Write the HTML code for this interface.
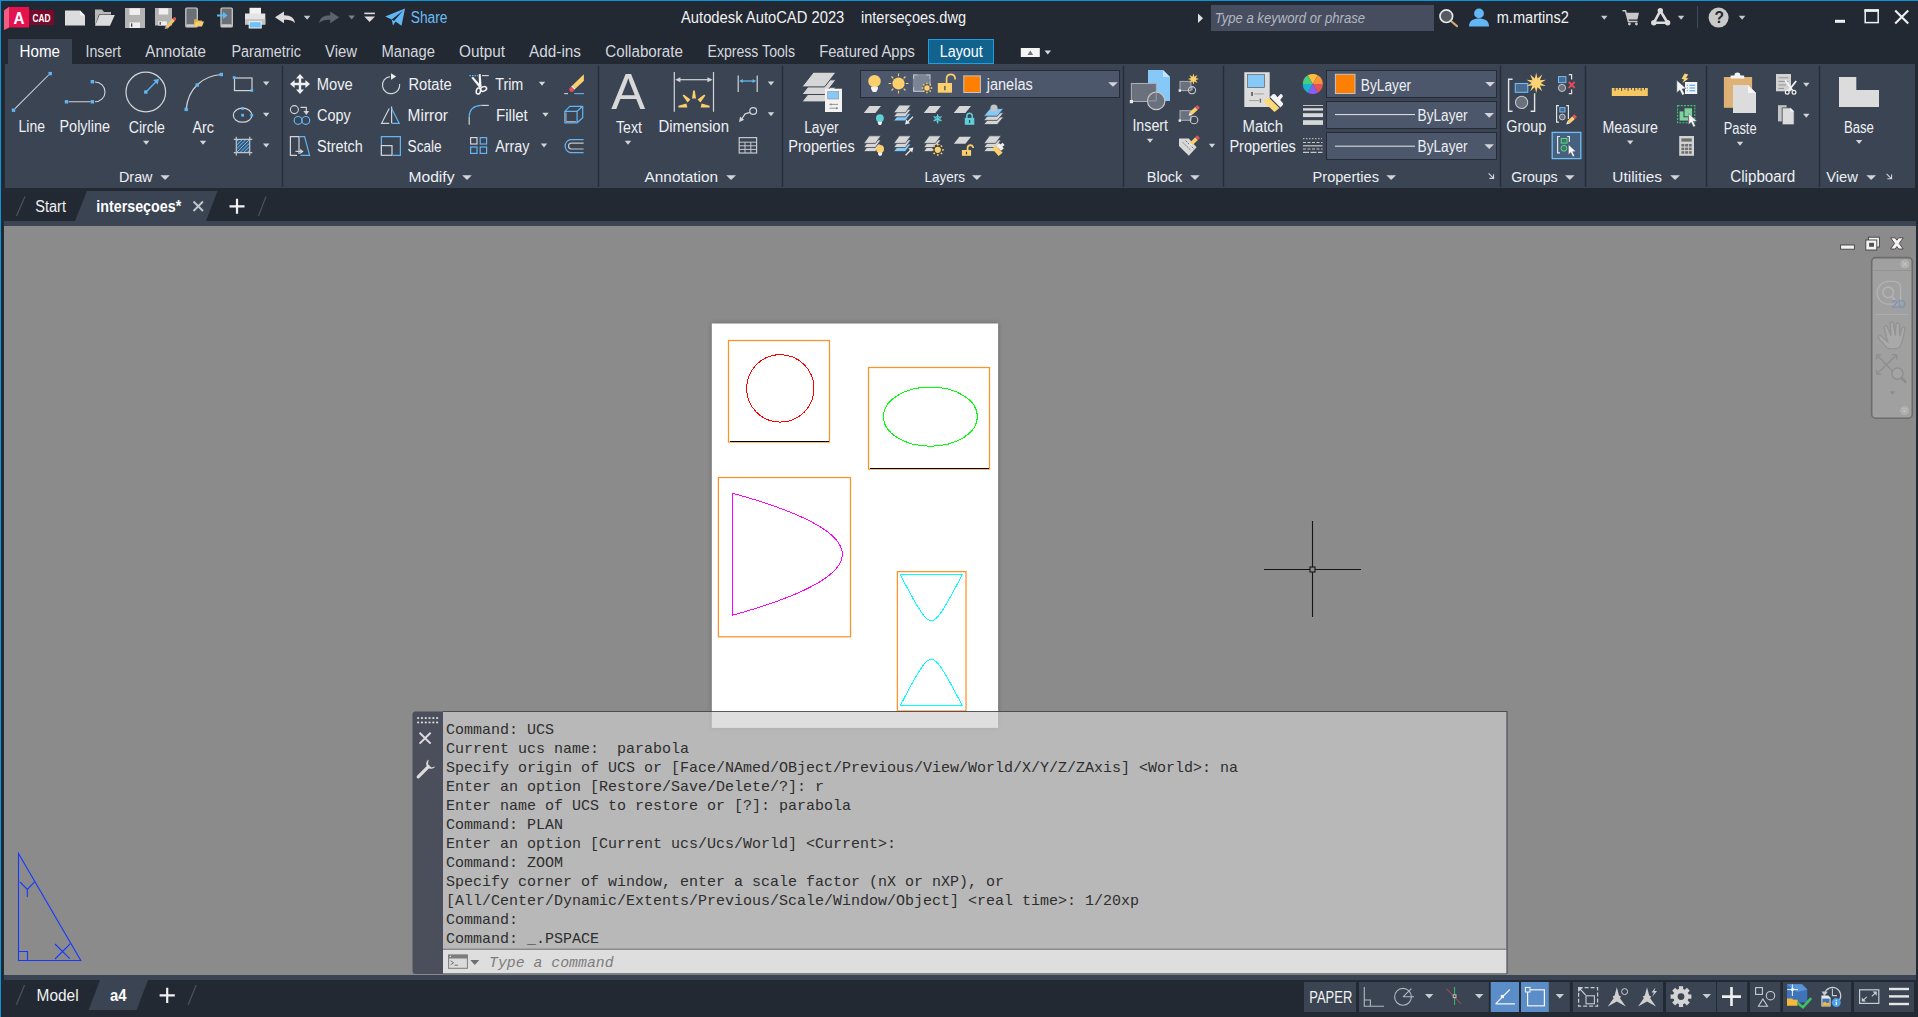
<!DOCTYPE html>
<html lang="en"><head><meta charset="utf-8"><title>Autodesk AutoCAD 2023 - interseçoes.dwg</title>
<style>
html,body{margin:0;padding:0;background:#222933;}
#app{position:relative;width:1918px;height:1017px;overflow:hidden;background:#222933;font-family:"Liberation Sans",sans-serif;}
#app>div{position:absolute;}
#ov{position:absolute;left:0;top:0;width:1918px;height:1017px;font-family:"Liberation Sans",sans-serif;}
#ov text{white-space:pre;}
</style></head>
<body>
<div id="app">
<div style="left:0px;top:0px;width:1918px;height:1px;background:#0c95da;"></div>
<div style="left:0px;top:0px;width:1px;height:1017px;background:#0c95da;"></div>
<div style="left:5px;top:64px;width:1910px;height:124px;background:#3b4453;"></div>
<div style="left:8px;top:39px;width:64px;height:26px;background:#3b4453;"></div>
<div style="left:928px;top:39px;width:66px;height:25px;background:#12628e;box-sizing:border-box;border:1px solid #1f9de0;"></div>
<div style="left:1211px;top:5px;width:223px;height:26px;background:#454d5e;"></div>
<div style="left:4px;top:221px;width:1912px;height:5px;background:#3b4453;"></div>
<div style="left:4px;top:225.7px;width:1912px;height:749px;background:#8b8b8b;"></div>
<div style="left:4px;top:974.7px;width:1912px;height:5.3px;background:#3b4453;"></div>
<svg id="ov" width="1918" height="1017" viewBox="0 0 1918 1017">
<path d="M75 221L87 191H217.5L206 221z" fill="#3b4453" />
<path d="M88.6 1010L100 980H148L136.6 1010z" fill="#3b4453" />
<line x1="282.5" y1="65.5" x2="282.5" y2="186.8" stroke="#272d38" stroke-width="1.4" />
<line x1="598.5" y1="65.5" x2="598.5" y2="186.8" stroke="#272d38" stroke-width="1.4" />
<line x1="782.5" y1="65.5" x2="782.5" y2="186.8" stroke="#272d38" stroke-width="1.4" />
<line x1="1123.5" y1="65.5" x2="1123.5" y2="186.8" stroke="#272d38" stroke-width="1.4" />
<line x1="1223.5" y1="65.5" x2="1223.5" y2="186.8" stroke="#272d38" stroke-width="1.4" />
<line x1="1500.5" y1="65.5" x2="1500.5" y2="186.8" stroke="#272d38" stroke-width="1.4" />
<line x1="1585.5" y1="65.5" x2="1585.5" y2="186.8" stroke="#272d38" stroke-width="1.4" />
<line x1="1706.5" y1="65.5" x2="1706.5" y2="186.8" stroke="#272d38" stroke-width="1.4" />
<line x1="1819.5" y1="65.5" x2="1819.5" y2="186.8" stroke="#272d38" stroke-width="1.4" />
<path d="M4 10.4L9 7H29V27.5H9L4 30z" fill="#e5124f" />
<path d="M4 10.4L9 7V27.5L4 30z" fill="#ee5f85" />
<rect x="29" y="10" width="25" height="15" fill="#7a0a2c" />
<text x="13.5" y="23.6" font-size="17" fill="#ffffff" textLength="11.0" lengthAdjust="spacingAndGlyphs" font-weight="bold">A</text>
<text x="32.5" y="21.6" font-size="10" fill="#ffffff" textLength="18.0" lengthAdjust="spacingAndGlyphs" font-weight="bold">CAD</text>
<path d="M65 10.5H80L85 15.5V25.5H65z" fill="#dcdcdc" />
<path d="M80 10.5V15.5H85z" fill="#f4f4f4" />
<path d="M95 25.8V9.6H102L104 12H111V14.5H99z" fill="#b8b8b8" />
<path d="M95 25.8L99.5 15H114.8L110 25.8z" fill="#dcdcdc" />
<path d="M125 8H145V28H125z" fill="#b4b4b4" />
<rect x="129.5" y="8.3" width="10.5" height="6.6" fill="#efefef" />
<rect x="129.5" y="22.4" width="10.5" height="5.6" fill="#efefef" />
<rect x="131" y="23.4" width="1.3" height="3.4" fill="#444" />
<path d="M155 8H172V25.5H155z" fill="#b4b4b4" />
<rect x="158.8" y="8.3" width="9.4" height="6.2" fill="#efefef" />
<rect x="158.3" y="21.3" width="8.5" height="4.2" fill="#efefef" />
<rect x="159.6" y="22" width="1.2" height="2.8" fill="#444" />
<path d="M165.5 26.5L172.5 18.5L175 20.8L168 28.2L164.8 28.8z" fill="#f2c569" />
<path d="M172.5 18.5L173.6 17.4A1.7 1.7 0 0 1 176 19.6L175 20.8z" fill="#e8505b" />
<path d="M165.5 26.5L168 28.2L164.6 29z" fill="#999" />
<rect x="185.8" y="8" width="11.5" height="19" fill="#6b6f76" stroke="#cfcfcf" stroke-width="1.2" rx="1" />
<rect x="186.4" y="24.3" width="10.3" height="2.5" fill="#cfcfcf" />
<path d="M194 26.5V19.3H197.5L198.5 20.5H202V22z" fill="#dfae4a" />
<path d="M194 26.5L196 21.5H204L202 26.5z" fill="#f6cd74" />
<rect x="221" y="8" width="11.3" height="19" fill="#6b6f76" stroke="#cfcfcf" stroke-width="1.2" rx="1" />
<rect x="221.6" y="24.3" width="10.1" height="2.5" fill="#cfcfcf" />
<path d="M217 14.4H223V11.8L227.6 15.4L223 19V16.4H217z" fill="#5bb8f5" />
<rect x="249.5" y="7.8" width="11.5" height="7" fill="#f2f2f2" />
<path d="M245 13.5H265.3V24.5H245z" fill="#e4e4e4" />
<rect x="245" y="19" width="20.3" height="5.5" fill="#c4c4c4" />
<rect x="249.2" y="21.7" width="12" height="6.3" fill="#6fc1f7" stroke="#f2f2f2" stroke-width="1" />
<path d="M275 17.3L284 11.5V15.2C291 15.2 294.5 18 295 23.2C292.5 20.3 289.5 19.6 284 19.7V23.2z" fill="#dcdcdc" />
<path d="M303.8 15.8h6.5l-3.2 4z" fill="#c8c8c8" />
<path d="M339.2 17.3L330.2 11.5V15.2C323.2 15.2 319.7 18 319.2 23.2C321.7 20.3 324.7 19.6 330.2 19.7V23.2z" fill="#5d636e" />
<path d="M348.4 15.4h6.5l-3.2 4z" fill="#7b808a" />
<rect x="364.3" y="12.6" width="10.6" height="1.6" fill="#dcdcdc" />
<path d="M364.3 16.6H375L369.6 22z" fill="#dcdcdc" />
<path d="M385.2 16.6L405 8.6L401.5 25.8L395.6 21.6L393 25.4L391.7 19.6z" fill="#62b8f5" />
<path d="M391.7 19.6L403.2 10.4L394 21z" fill="#222933" />
<text x="410.8" y="23.4" font-size="15.6" fill="#6cbcf4" textLength="36.7" lengthAdjust="spacingAndGlyphs">Share</text>
<text x="681.0" y="23.3" font-size="15.6" fill="#f2f2f2" textLength="163.3" lengthAdjust="spacingAndGlyphs">Autodesk AutoCAD 2023</text>
<text x="861.0" y="23.3" font-size="15.6" fill="#f2f2f2" textLength="105.0" lengthAdjust="spacingAndGlyphs">interseçoes.dwg</text>
<path d="M1198 13.4L1203 18.2L1198 23z" fill="#e0e0e0" />
<text x="1214.7" y="22.8" font-size="14.5" fill="#b4b8c2" textLength="150.3" lengthAdjust="spacingAndGlyphs" font-style="italic">Type a keyword or phrase</text>
<line x1="1451" y1="21" x2="1457" y2="26.2" stroke="#d0a673" stroke-width="2.2" stroke-linecap="round"/>
<circle cx="1446.3" cy="16.2" r="6.3" fill="#555a63" stroke="#e8e8e8" stroke-width="1.7" />
<circle cx="1479" cy="13.4" r="4.9" fill="#62b8f5" />
<path d="M1469 26.6C1469 20.6 1473.5 18.6 1479 18.6C1484.5 18.6 1489 20.6 1489 26.6z" fill="#62b8f5" />
<text x="1496.7" y="23.3" font-size="15.6" fill="#f2f2f2" textLength="72.1" lengthAdjust="spacingAndGlyphs">m.martins2</text>
<path d="M1601.0 15.8h6.5l-3.2 4z" fill="#c8c8c8" />
<path d="M1622.5 10.8H1625.5L1628.4 21.4H1637.5" fill="none" stroke="#c8c8c8" stroke-width="1.5" />
<path d="M1626 12.8H1639L1637.4 19.4H1627.8z" fill="#c8c8c8" />
<circle cx="1629.4" cy="24" r="1.4" fill="#c8c8c8" />
<circle cx="1636.4" cy="24" r="1.4" fill="#c8c8c8" />
<path d="M1660.3 10.8L1653.8 22.8H1667.6z" fill="none" stroke="#dcdcdc" stroke-width="2.6" stroke-linejoin="round"/>
<circle cx="1660.3" cy="10.6" r="2.7" fill="#dcdcdc" />
<circle cx="1653.8" cy="22.8" r="2.7" fill="#dcdcdc" />
<circle cx="1667.6" cy="22.8" r="2.7" fill="#dcdcdc" />
<path d="M1677.8 15.8h6.5l-3.2 4z" fill="#c8c8c8" />
<line x1="1697.5" y1="6" x2="1697.5" y2="28" stroke="#3f4757" stroke-width="1.2" />
<circle cx="1718.6" cy="17.6" r="10" fill="#c9c9c9" />
<text x="1714.4" y="23.4" font-size="15.6" fill="#222933" font-weight="bold">?</text>
<path d="M1738.8 15.8h6.5l-3.2 4z" fill="#c8c8c8" />
<rect x="1835" y="19.8" width="10" height="3" fill="#f0f0f0" />
<rect x="1865.2" y="10" width="13" height="12.6" fill="none" stroke="#f0f0f0" stroke-width="1.5" />
<rect x="1864.4" y="9.3" width="14.6" height="2.6" fill="#f0f0f0" />
<path d="M1895.2 10.4L1908.2 23.4M1908.2 10.4L1895.2 23.4" fill="none" stroke="#f0f0f0" stroke-width="2.1" />
<text x="19.5" y="56.8" font-size="15.6" fill="#ffffff" textLength="40.5" lengthAdjust="spacingAndGlyphs">Home</text>
<text x="85.5" y="56.8" font-size="15.6" fill="#d4d7de" textLength="35.5" lengthAdjust="spacingAndGlyphs">Insert</text>
<text x="145.3" y="56.8" font-size="15.6" fill="#d4d7de" textLength="60.7" lengthAdjust="spacingAndGlyphs">Annotate</text>
<text x="231.5" y="56.8" font-size="15.6" fill="#d4d7de" textLength="69.5" lengthAdjust="spacingAndGlyphs">Parametric</text>
<text x="325.0" y="56.8" font-size="15.6" fill="#d4d7de" textLength="32.0" lengthAdjust="spacingAndGlyphs">View</text>
<text x="381.5" y="56.8" font-size="15.6" fill="#d4d7de" textLength="53.5" lengthAdjust="spacingAndGlyphs">Manage</text>
<text x="459.0" y="56.8" font-size="15.6" fill="#d4d7de" textLength="46.0" lengthAdjust="spacingAndGlyphs">Output</text>
<text x="529.0" y="56.8" font-size="15.6" fill="#d4d7de" textLength="52.0" lengthAdjust="spacingAndGlyphs">Add-ins</text>
<text x="605.3" y="56.8" font-size="15.6" fill="#d4d7de" textLength="77.7" lengthAdjust="spacingAndGlyphs">Collaborate</text>
<text x="707.5" y="56.8" font-size="15.6" fill="#d4d7de" textLength="87.5" lengthAdjust="spacingAndGlyphs">Express Tools</text>
<text x="819.2" y="56.8" font-size="15.6" fill="#d4d7de" textLength="95.8" lengthAdjust="spacingAndGlyphs">Featured Apps</text>
<text x="939.7" y="56.8" font-size="15.6" fill="#ffffff" textLength="43.1" lengthAdjust="spacingAndGlyphs">Layout</text>
<rect x="1020.8" y="48" width="19" height="9" fill="#f4f4f4" />
<path d="M1027.5 55L1030.3 50.5L1033.1 55z" fill="#707070" />
<path d="M1044.5 50.6h6.5l-3.2 4z" fill="#d8d8d8" />
<line x1="16.5" y1="216" x2="25" y2="196.5" stroke="#4a5263" stroke-width="1.2" />
<text x="35.3" y="212.4" font-size="15.6" fill="#f2f2f2" textLength="30.7" lengthAdjust="spacingAndGlyphs">Start</text>
<text x="96.3" y="212.4" font-size="15.6" fill="#ffffff" textLength="84.9" lengthAdjust="spacingAndGlyphs" font-weight="bold">interseçoes*</text>
<path d="M193.5 201.5L203 211M203 201.5L193.5 211" fill="none" stroke="#c4c7cc" stroke-width="1.9" />
<path d="M229.5 206.3H244.5M237 198.8V213.8" fill="none" stroke="#f2f2f2" stroke-width="2.2" />
<line x1="258.5" y1="216" x2="266" y2="196.5" stroke="#4a5263" stroke-width="1.2" />
<line x1="15" y1="108.6" x2="48.6" y2="75" stroke="#d2d4d8" stroke-width="1.05" />
<rect x="11.8" y="108.5" width="3.4" height="3.4" fill="#62b5f0" />
<rect x="48.5" y="71.9" width="3.4" height="3.4" fill="#62b5f0" />
<text x="18.6" y="132.2" font-size="15.6" fill="#eef0f3" textLength="26.4" lengthAdjust="spacingAndGlyphs">Line</text>
<path d="M68.6 101.7H90.6M95 82A10 9.9 0 0 1 95 101.8" fill="none" stroke="#d2d4d8" stroke-width="1.1" />
<rect x="64.8" y="100.1" width="3.4" height="3.4" fill="#62b5f0" />
<rect x="90.7" y="100.1" width="3.4" height="3.4" fill="#62b5f0" />
<rect x="90.7" y="80.0" width="3.4" height="3.4" fill="#62b5f0" />
<text x="59.5" y="132.2" font-size="15.6" fill="#eef0f3" textLength="50.5" lengthAdjust="spacingAndGlyphs">Polyline</text>
<circle cx="145.8" cy="92" r="19.8" fill="none" stroke="#d2d4d8" stroke-width="1.2" />
<line x1="146" y1="92" x2="156.5" y2="81.3" stroke="#62b5f0" stroke-width="1.3" />
<path d="M159 78.8L157.7 84.6L153.2 80.1z" fill="#62b5f0" />
<rect x="144.1" y="90.3" width="3.4" height="3.4" fill="#62b5f0" />
<text x="128.7" y="133.0" font-size="15.6" fill="#eef0f3" textLength="36.3" lengthAdjust="spacingAndGlyphs">Circle</text>
<path d="M143.0 140.7h6.4l-3.2 4z" fill="#d2d4d8" />
<path d="M186.2 109.4C188 88 203 76 221.3 74.5" fill="none" stroke="#d2d4d8" stroke-width="1.2" />
<rect x="184.5" y="107.7" width="3.4" height="3.4" fill="#62b5f0" />
<rect x="195.5" y="83.3" width="3.4" height="3.4" fill="#62b5f0" />
<rect x="219.6" y="72.8" width="3.4" height="3.4" fill="#62b5f0" />
<text x="192.5" y="133.0" font-size="15.6" fill="#eef0f3" textLength="21.5" lengthAdjust="spacingAndGlyphs">Arc</text>
<path d="M199.8 140.7h6.4l-3.2 4z" fill="#d2d4d8" />
<rect x="234.5" y="78" width="17.5" height="12.6" fill="none" stroke="#d2d4d8" stroke-width="1.2" />
<rect x="232.8" y="76.2" width="2.8" height="2.8" fill="#62b5f0" />
<rect x="250.4" y="89.0" width="2.8" height="2.8" fill="#62b5f0" />
<path d="M263.0 81.6h6.4l-3.2 4z" fill="#d2d4d8" />
<ellipse cx="242.6" cy="115.2" rx="9.3" ry="7" fill="none" stroke="#d2d4d8" stroke-width="1.2" />
<rect x="241.2" y="113.8" width="2.8" height="2.8" fill="#62b5f0" />
<rect x="241.2" y="107.0" width="2.8" height="2.8" fill="#62b5f0" />
<rect x="250.4" y="113.8" width="2.8" height="2.8" fill="#62b5f0" />
<path d="M263.0 112.8h6.4l-3.2 4z" fill="#d2d4d8" />
<clipPath id="hc"><rect x="236.5" y="139.5" width="13" height="13"/></clipPath>
<rect x="236.5" y="139.5" width="13" height="13" fill="#355a7c" />
<g clip-path="url(#hc)">
<line x1="225.7" y1="152.5" x2="238.7" y2="139.5" stroke="#6dbbf2" stroke-width="1" />
<line x1="229.3" y1="152.5" x2="242.3" y2="139.5" stroke="#6dbbf2" stroke-width="1" />
<line x1="232.9" y1="152.5" x2="245.9" y2="139.5" stroke="#6dbbf2" stroke-width="1" />
<line x1="236.5" y1="152.5" x2="249.5" y2="139.5" stroke="#6dbbf2" stroke-width="1" />
<line x1="240.1" y1="152.5" x2="253.1" y2="139.5" stroke="#6dbbf2" stroke-width="1" />
<line x1="243.7" y1="152.5" x2="256.7" y2="139.5" stroke="#6dbbf2" stroke-width="1" />
<line x1="247.3" y1="152.5" x2="260.3" y2="139.5" stroke="#6dbbf2" stroke-width="1" />
<line x1="250.9" y1="152.5" x2="263.9" y2="139.5" stroke="#6dbbf2" stroke-width="1" />
</g>
<path d="M236.3 136.8V155.4M249.7 136.8V155.4M233.8 139.4H252.3M233.8 152.6H252.3" fill="none" stroke="#c2c4c8" stroke-width="1.2" />
<path d="M263.0 143.6h6.4l-3.2 4z" fill="#d2d4d8" />
<text x="119.0" y="182.2" font-size="15" fill="#eef0f3" textLength="33.5" lengthAdjust="spacingAndGlyphs">Draw</text>
<path d="M160.4 175.2H169.8L165.10000000000002 180z" fill="#d2d4d8" />
<path d="M300 74L304 78.6H301.2V82.8H305.4V80L310 84L305.4 88V85.2H301.2V89.4H304L300 94L296 89.4H298.8V85.2H294.6V88L290 84L294.6 80V82.8H298.8V78.6H296z" fill="#f0f0f0" />
<text x="316.8" y="89.7" font-size="15.6" fill="#eef0f3" textLength="36.0" lengthAdjust="spacingAndGlyphs">Move</text>
<circle cx="294.4" cy="109.6" r="4" fill="none" stroke="#d2d4d8" stroke-width="1.1" />
<path d="M300.5 107.3H306.3V111.5" fill="none" stroke="#d2d4d8" stroke-width="1.2" />
<path d="M303.4 111L306.3 115L309.2 111z" fill="#d2d4d8" />
<circle cx="298.1" cy="120.4" r="3.9" fill="none" stroke="#62b5f0" stroke-width="1.2" />
<circle cx="305.8" cy="120.4" r="3.9" fill="none" stroke="#62b5f0" stroke-width="1.2" />
<text x="317.0" y="120.9" font-size="15.6" fill="#eef0f3" textLength="33.8" lengthAdjust="spacingAndGlyphs">Copy</text>
<path d="M299 154V136.6H290.4V155.4H297" fill="none" stroke="#d2d4d8" stroke-width="1.2" />
<path d="M299 136.6H304.6L309.6 155.4H300.5" fill="none" stroke="#62b5f0" stroke-width="1.2" />
<path d="M295.5 151.4H301" fill="none" stroke="#d2d4d8" stroke-width="1.2" />
<path d="M300.2 148.8L303.6 151.4L300.2 154z" fill="#d2d4d8" />
<text x="317.0" y="152.2" font-size="15.6" fill="#eef0f3" textLength="45.8" lengthAdjust="spacingAndGlyphs">Stretch</text>
<path d="M389.8 76.6A8.6 8.6 0 1 0 399.6 84" fill="none" stroke="#d2d4d8" stroke-width="1.2" />
<path d="M391 73.2L396.2 76.4L391 79.8z" fill="#f0f0f0" />
<text x="408.4" y="89.7" font-size="15.6" fill="#eef0f3" textLength="43.3" lengthAdjust="spacingAndGlyphs">Rotate</text>
<path d="M389.2 108.5L381.6 123.3H389.2" fill="none" stroke="#d2d4d8" stroke-width="1.2" />
<path d="M391.6 123.3V106.6" fill="none" stroke="#d2d4d8" stroke-width="1.2" />
<path d="M391.6 108.5L399.2 123.3H391.6" fill="none" stroke="#62b5f0" stroke-width="1.2" />
<text x="407.6" y="120.9" font-size="15.6" fill="#eef0f3" textLength="40.4" lengthAdjust="spacingAndGlyphs">Mirror</text>
<path d="M381.4 155.3V136.6H400.4V155.3H393" fill="none" stroke="#62b5f0" stroke-width="1.2" />
<rect x="381.4" y="145.6" width="10.6" height="9.7" fill="none" stroke="#d2d4d8" stroke-width="1.2" />
<text x="407.6" y="152.2" font-size="15.6" fill="#eef0f3" textLength="34.1" lengthAdjust="spacingAndGlyphs">Scale</text>
<path d="M469.4 75.6H478" fill="none" stroke="#62b5f0" stroke-width="1.2" stroke-dasharray="1.6 1"/>
<path d="M482 75.6H488.8" fill="none" stroke="#d2d4d8" stroke-width="1.2" />
<path d="M478.7 74.3L480.7 74.1L481.5 86L479.1 87.6z" fill="#f4f4f4" />
<path d="M471.3 77.7L473.1 76.8L481.7 86.4L479.5 88z" fill="#f4f4f4" />
<ellipse cx="478.4" cy="91" rx="2.1" ry="3.1" fill="none" stroke="#f4f4f4" stroke-width="1.5" transform="rotate(14 478.4 91)"/>
<ellipse cx="483.6" cy="88.9" rx="3.1" ry="2.2" fill="none" stroke="#f4f4f4" stroke-width="1.5" transform="rotate(-24 483.6 88.9)"/>
<text x="495.2" y="89.7" font-size="15.6" fill="#eef0f3" textLength="28.1" lengthAdjust="spacingAndGlyphs">Trim</text>
<path d="M538.8 81.8h6.4l-3.2 4z" fill="#d2d4d8" />
<path d="M469.2 124.7V116.4" fill="none" stroke="#d2d4d8" stroke-width="1.2" />
<path d="M469.2 116.4C469.5 109.6 474 105.7 481.4 105.4" fill="none" stroke="#62b5f0" stroke-width="1.2" />
<path d="M481.4 105.4H488.8" fill="none" stroke="#d2d4d8" stroke-width="1.2" />
<text x="496.0" y="120.9" font-size="15.6" fill="#eef0f3" textLength="31.8" lengthAdjust="spacingAndGlyphs">Fillet</text>
<path d="M542.3 112.7h6.4l-3.2 4z" fill="#d2d4d8" />
<rect x="470.6" y="137.6" width="6.4" height="6.4" fill="none" stroke="#d2d4d8" stroke-width="1.2" />
<rect x="480.2" y="137.6" width="6.4" height="6.4" fill="none" stroke="#62b5f0" stroke-width="1.2" />
<rect x="470.6" y="147" width="6.4" height="6.4" fill="none" stroke="#62b5f0" stroke-width="1.2" />
<rect x="480.2" y="147" width="6.4" height="6.4" fill="none" stroke="#62b5f0" stroke-width="1.2" />
<text x="495.2" y="152.2" font-size="15.6" fill="#eef0f3" textLength="34.3" lengthAdjust="spacingAndGlyphs">Array</text>
<path d="M540.8 143.6h6.4l-3.2 4z" fill="#d2d4d8" />
<path d="M572.6 85.2L583.9 74.2V80.8L575.6 88.6z" fill="#fbd06c" />
<path d="M571.2 86.6L572.6 85.2L575.6 88.6L574.4 89.8z" fill="#f2f2f2" />
<path d="M571.2 86.6L574.4 89.8L573 91.4A2.4 2.4 0 0 1 569.4 88.4z" fill="#ee4b55" />
<path d="M564.2 93.6H568" fill="none" stroke="#d2d4d8" stroke-width="1.1" />
<path d="M574.2 93.6H583.9" fill="none" stroke="#62b5f0" stroke-width="1.1" />
<path d="M564.8 111.3H577.1V122.8H564.8zM564.8 111.3L569.8 106.3H582.7L577.1 111.3M582.7 106.3V117.8L577.1 122.8" fill="none" stroke="#62b5f0" stroke-width="1.2" stroke-linejoin="round"/>
<path d="M566 121.6V112.5M566 121.6H575.9" fill="none" stroke="#a8aab0" stroke-width="1.1" />
<path d="M583.6 139.6H570.6A6.6 6.6 0 0 0 570.6 152.6H583.6" fill="none" stroke="#62b5f0" stroke-width="1.3" />
<path d="M583.6 143.2H571.4A2.9 2.9 0 0 0 571.4 149H583.6" fill="none" stroke="#c4c6ca" stroke-width="1.2" />
<text x="408.4" y="182.2" font-size="15" fill="#eef0f3" textLength="46.1" lengthAdjust="spacingAndGlyphs">Modify</text>
<path d="M462.2 175.2H471.8L467.0 180z" fill="#d2d4d8" />
<text x="611.2" y="109.0" font-size="50.5" fill="#d8d8d8" textLength="34.0" lengthAdjust="spacingAndGlyphs">A</text>
<text x="616.0" y="133.0" font-size="15.6" fill="#eef0f3" textLength="26.0" lengthAdjust="spacingAndGlyphs">Text</text>
<path d="M624.8 140.8h6.4l-3.2 4z" fill="#d2d4d8" />
<path d="M674.3 72V111.7M713.5 72V111.7" fill="none" stroke="#d2d4d8" stroke-width="1.2" />
<path d="M678 79.7H710" fill="none" stroke="#d2d4d8" stroke-width="1.2" />
<path d="M675.2 79.7L680.4 77.2V82.2zM712.6 79.7L707.4 77.2V82.2z" fill="#d2d4d8" />
<path d="M693.2 90.6H694.8L696 98.6H692z" fill="#fbd06c" />
<path d="M682.6 95.6L683.8 94.4L690.4 99.6L687.6 102.4z" fill="#fbd06c" />
<path d="M705.4 95.6L704.2 94.4L697.6 99.6L700.4 102.4z" fill="#fbd06c" />
<path d="M678.4 107.4V105.8L686.4 103.6L687.4 107.6z" fill="#fbd06c" />
<path d="M709.6 107.4V105.8L701.6 103.6L700.6 107.6z" fill="#fbd06c" />
<text x="658.4" y="132.2" font-size="15.6" fill="#eef0f3" textLength="70.6" lengthAdjust="spacingAndGlyphs">Dimension</text>
<path d="M738.2 75.5V92M757.2 75.5V92" fill="none" stroke="#d2d4d8" stroke-width="1.2" />
<path d="M741 81H754.6" fill="none" stroke="#62b5f0" stroke-width="1.3" />
<path d="M739.2 81L742.8 79V83zM756.2 81L752.6 79V83z" fill="#62b5f0" />
<path d="M767.8 81.4h6.4l-3.2 4z" fill="#d2d4d8" />
<circle cx="753.2" cy="111" r="3.4" fill="none" stroke="#d2d4d8" stroke-width="1.2" />
<path d="M750 112.4L745.2 113.8L741.2 119.6" fill="none" stroke="#d2d4d8" stroke-width="1.2" />
<path d="M739 122.2L740 116.8L744.2 119.8z" fill="#d2d4d8" />
<path d="M767.8 112.2h6.4l-3.2 4z" fill="#d2d4d8" />
<rect x="739.2" y="137.6" width="17.4" height="15.4" fill="none" stroke="#c6c8cc" stroke-width="1.2" />
<path d="M739.2 142.2H756.6M739.2 145.8H756.6M739.2 149.4H756.6M745 142.2V153M750.8 142.2V153" fill="none" stroke="#c6c8cc" stroke-width="1" />
<text x="644.6" y="182.2" font-size="15" fill="#eef0f3" textLength="73.4" lengthAdjust="spacingAndGlyphs">Annotation</text>
<path d="M726.2 175.2H736L731.1 180z" fill="#d2d4d8" />
<path d="M813.4 87.2H836L824.6 101.9H801.9z" fill="#d6d6d6" stroke="#3b4453" stroke-width="1" />
<path d="M813.4 79.8H836L824.6 94.5H801.9z" fill="#d6d6d6" stroke="#3b4453" stroke-width="1" />
<path d="M813.4 72.2H836L824.6 86.9H801.9z" fill="#d6d6d6" stroke="#3b4453" stroke-width="1" />
<rect x="825" y="88.7" width="17" height="23.3" fill="#f2f2f2" />
<rect x="827.7" y="91.6" width="11" height="7.4" fill="#86c8f8" stroke="#8a8f99" stroke-width="0.6" />
<path d="M829.5 104.4H838M829.5 108.2H838" fill="none" stroke="#8a8a8a" stroke-width="0.9" />
<path d="M829.5 104.4l2 -1.4v2.8zM838 108.2l-2 -1.4v2.8z" fill="#8a8a8a" />
<text x="804.2" y="132.6" font-size="15.6" fill="#eef0f3" textLength="34.5" lengthAdjust="spacingAndGlyphs">Layer</text>
<text x="788.2" y="152.3" font-size="15.6" fill="#eef0f3" textLength="66.5" lengthAdjust="spacingAndGlyphs">Properties</text>
<rect x="860.5" y="70.5" width="259" height="27" fill="#4c576b" stroke="#252b36" stroke-width="1" />
<circle cx="874.5" cy="81.2" r="6.2" fill="#fbd06c" />
<path d="M871.1 86.8H877.9V89.0L876.2 92.0H872.8L871.1 89.0z" fill="#f4f4f4" />
<circle cx="898.5" cy="83.5" r="6.1" fill="#fbd06c" />
<path d="M905.8 83.5L908.4 83.5M903.7 88.7L905.5 90.5M898.5 90.8L898.5 93.4M893.3 88.7L891.5 90.5M891.2 83.5L888.6 83.5M893.3 78.3L891.5 76.5M898.5 76.2L898.5 73.6M903.7 78.3L905.5 76.5" fill="none" stroke="#fbd06c" stroke-width="1.1" />
<rect x="913.6" y="74.9" width="16.4" height="16.4" fill="#7b8494" stroke="#c4c6cc" stroke-width="1.1" />
<path d="M917.6 74.9H926M913.6 79V87.2M930 79V82" fill="none" stroke="#7b8494" stroke-width="1.6" />
<circle cx="927" cy="88" r="4.6" fill="#4c576b" />
<circle cx="927" cy="88" r="2.7" fill="#fbd06c" />
<path d="M930.7 88.0L932.3 88.0M929.6 90.6L930.7 91.7M927.0 91.7L927.0 93.3M924.4 90.6L923.3 91.7M923.3 88.0L921.7 88.0M924.4 85.4L923.3 84.3M927.0 84.3L927.0 82.7M929.6 85.4L930.7 84.3" fill="none" stroke="#fbd06c" stroke-width="1.4" />
<rect x="937.8" y="83" width="14.2" height="9.7" fill="#fbd06c" />
<path d="M946.6 83.0V78.0A4.3 4.3 0 0 1 955.1 78.0V79.6" fill="none" stroke="#fbd06c" stroke-width="1.7" />
<rect x="944.3" y="85.91" width="1.2" height="4.365" fill="#3b4453" />
<rect x="963.8" y="75.9" width="16.6" height="16.6" fill="#ff7f00" stroke="#c2c5cc" stroke-width="1" />
<text x="986.8" y="90.4" font-size="15.6" fill="#eef0f3" textLength="45.9" lengthAdjust="spacingAndGlyphs">janelas</text>
<path d="M1108.2 82.2H1117.8L1113 86.8z" fill="#d2d4d8" />
<path d="M869.4 106.1H881.0L875.4 113.1H863.8z" fill="#d6d6d6" />
<circle cx="879.9" cy="118.2" r="3.9" fill="#5fd0d8" />
<path d="M877.8 121.7H882.0V123.1L881.0 125.0H878.8L877.8 123.1z" fill="#f4f4f4" />
<path d="M899.2 113.3H911.0L905.4 120.9H893.6z" fill="#86c8f8" stroke="#3b4453" stroke-width="0.8" />
<path d="M899.2 109.2H911.0L905.4 116.8H893.6z" fill="#d6d6d6" stroke="#3b4453" stroke-width="0.8" />
<path d="M899.2 105.1H911.0L905.4 112.7H893.6z" fill="#d6d6d6" stroke="#3b4453" stroke-width="0.8" />
<path d="M913 116.6L907.6 122" fill="none" stroke="#e8e8e8" stroke-width="1.3" />
<path d="M905 124.4L906.2 119.4L910 123.2z" fill="#e8e8e8" />
<path d="M929.4 106.1H941.0L935.4 113.1H923.8z" fill="#d6d6d6" />
<path d="M937.6 123.4L937.6 114.2M933.6 121.1L941.6 116.5M933.6 116.5L941.6 121.1" fill="none" stroke="#5fd0d8" stroke-width="1.2" />
<circle cx="937.6" cy="118.8" r="2.6" fill="none" stroke="#5fd0d8" stroke-width="0.9" />
<path d="M959.4 106.1H971.0L965.4 113.1H953.8z" fill="#d6d6d6" />
<rect x="964.8" y="117.9" width="9.5" height="6.9" fill="#5fd0d8" />
<path d="M966.9 117.9V115.4A2.7 2.7 0 0 1 972.2 115.4V117.9" fill="none" stroke="#5fd0d8" stroke-width="1.5" />
<rect x="968.9499999999999" y="119.97" width="1.2" height="3.1050000000000004" fill="#3b4453" />
<path d="M990.0 117.0H1003.6L997.2 124.6H983.6z" fill="#d6d6d6" stroke="#3b4453" stroke-width="0.8" />
<path d="M990.0 112.8H1003.6L997.2 120.4H983.6z" fill="#d6d6d6" stroke="#3b4453" stroke-width="0.8" />
<path d="M990.0 108.6H1003.6L997.2 116.2H983.6z" fill="#86c8f8" stroke="#3b4453" stroke-width="0.8" />
<circle cx="994" cy="108" r="3.6" fill="#c4c4c4" />
<path d="M869.2 144.0H881.0L875.4 151.6H863.6z" fill="#d6d6d6" stroke="#3b4453" stroke-width="0.8" />
<path d="M869.2 139.9H881.0L875.4 147.5H863.6z" fill="#d6d6d6" stroke="#3b4453" stroke-width="0.8" />
<path d="M869.2 135.8H881.0L875.4 143.4H863.6z" fill="#d6d6d6" stroke="#3b4453" stroke-width="0.8" />
<circle cx="880.1" cy="149" r="3.9" fill="#fbd06c" />
<path d="M878.0 152.5H882.2V153.9L881.2 155.8H879.0L878.0 153.9z" fill="#f4f4f4" />
<path d="M899.2 144.0H911.0L905.4 151.6H893.6z" fill="#86c8f8" stroke="#3b4453" stroke-width="0.8" />
<path d="M899.2 139.9H911.0L905.4 147.5H893.6z" fill="#d6d6d6" stroke="#3b4453" stroke-width="0.8" />
<path d="M899.2 135.8H911.0L905.4 143.4H893.6z" fill="#d6d6d6" stroke="#3b4453" stroke-width="0.8" />
<path d="M905.6 155.2L911 149.8" fill="none" stroke="#e8e8e8" stroke-width="1.3" />
<path d="M913.4 147.4L912.2 152.4L908.4 148.6z" fill="#e8e8e8" />
<path d="M929.2 144.0H941.0L935.4 151.6H923.6z" fill="#d6d6d6" stroke="#3b4453" stroke-width="0.8" />
<path d="M929.2 139.9H941.0L935.4 147.5H923.6z" fill="#d6d6d6" stroke="#3b4453" stroke-width="0.8" />
<path d="M929.2 135.8H941.0L935.4 143.4H923.6z" fill="#d6d6d6" stroke="#3b4453" stroke-width="0.8" />
<circle cx="937.8" cy="149.8" r="5.6" fill="#3b4453" />
<circle cx="937.8" cy="149.8" r="3.1" fill="#fbd06c" />
<path d="M942.2 149.8L943.7 149.8M940.9 152.9L942.0 154.0M937.8 154.2L937.8 155.7M934.7 152.9L933.6 154.0M933.4 149.8L931.9 149.8M934.7 146.7L933.6 145.6M937.8 145.4L937.8 143.9M940.9 146.7L942.0 145.6" fill="none" stroke="#fbd06c" stroke-width="1.7" />
<path d="M959.4 136.8H971.0L965.4 143.8H953.8z" fill="#d6d6d6" />
<rect x="961.9" y="150" width="9.2" height="5.8" fill="#fbd06c" />
<path d="M967.6 150.0V147.3A2.8 2.8 0 0 1 973.1 147.3V148.0" fill="none" stroke="#fbd06c" stroke-width="1.7" />
<rect x="965.9" y="151.74" width="1.2" height="2.61" fill="#3b4453" />
<path d="M989.4 144.0H1001.2L995.6 151.6H983.8z" fill="#d6d6d6" stroke="#3b4453" stroke-width="0.8" />
<path d="M989.4 139.9H1001.2L995.6 147.5H983.8z" fill="#d6d6d6" stroke="#3b4453" stroke-width="0.8" />
<path d="M989.4 135.8H1001.2L995.6 143.4H983.8z" fill="#d6d6d6" stroke="#3b4453" stroke-width="0.8" />
<path d="M992 148.6L996 145.4L1002.6 152.8L998.6 156z" fill="#fbd06c" />
<path d="M996 145.4L999 143L1000.4 144.6L1002.6 142.8L1004.6 145L1002.4 146.8L1003.8 148.4L1001 150.8z" fill="#f0f0f0" />
<text x="924.4" y="182.2" font-size="15" fill="#eef0f3" textLength="40.6" lengthAdjust="spacingAndGlyphs">Layers</text>
<path d="M972 175.2H981.6L976.8 180z" fill="#d2d4d8" />
<path d="M1148 70H1163L1170 77V101H1148z" fill="#86c8f8" />
<path d="M1163 70V77H1170z" fill="#c4e4fb" />
<rect x="1131.4" y="83.5" width="25" height="18" fill="#6b707d" stroke="#a9acb4" stroke-width="1.1" />
<circle cx="1156.2" cy="100.9" r="8.7" fill="#6b707d" stroke="#c8c8c8" stroke-width="1.2" />
<path d="M1156.2 92.3V100.9H1147.6" fill="none" stroke="#9a9da5" stroke-width="1" />
<rect x="1129.8" y="100" width="3.2" height="3.2" fill="#ececec" />
<text x="1132.4" y="130.5" font-size="15.6" fill="#eef0f3" textLength="35.6" lengthAdjust="spacingAndGlyphs">Insert</text>
<path d="M1146.8 138.7h6.4l-3.2 4z" fill="#d2d4d8" />
<rect x="1180" y="81.4" width="11" height="9.2" fill="#6b707d" stroke="#a9acb4" stroke-width="1" />
<circle cx="1192" cy="90.2" r="3.6" fill="none" stroke="#c8c8c8" stroke-width="1.1" />
<path d="M1192 86.6V90.2" fill="none" stroke="#c8c8c8" stroke-width="1" />
<rect x="1178.6" y="89.4" width="2.4" height="2.4" fill="#ececec" />
<path d="M1193.4 73.5L1194.4 76.7L1197.4 75.1L1195.8 78.1L1199.0 79.1L1195.8 80.1L1197.4 83.1L1194.4 81.5L1193.4 84.7L1192.4 81.5L1189.4 83.1L1191.0 80.1L1187.8 79.1L1191.0 78.1L1189.4 75.1L1192.4 76.7z" fill="#fbd06c" />
<rect x="1180" y="110.7" width="11" height="9.6" fill="#6b707d" stroke="#a9acb4" stroke-width="1" />
<circle cx="1194" cy="120" r="3.8" fill="none" stroke="#c8c8c8" stroke-width="1.1" />
<rect x="1178.6" y="119.4" width="2.4" height="2.4" fill="#ececec" />
<path d="M1188.6 115.8L1192.3 114.8L1189.8 112.1z" fill="#e8e8e8" />
<path d="M1192.3 114.8L1197.8 109.7L1195.3 107.0L1189.8 112.1z" fill="#fbd06c" />
<path d="M1197.8 109.7L1199.9 107.7L1197.3 105.1L1195.3 107.0z" fill="#e8505b" />
<path d="M1179 138.6H1188.8L1196.6 147.2L1188.8 155.8L1179 146z" fill="#d8d8d8" />
<path d="M1182.6 142.2L1190.4 150M1185.6 140.6L1193.4 148.4" fill="none" stroke="#6a6f7a" stroke-width="0.9" stroke-dasharray="2 1"/>
<path d="M1189.0 146.2L1192.7 145.1L1190.1 142.5z" fill="#e8e8e8" />
<path d="M1192.7 145.1L1197.9 139.9L1195.3 137.3L1190.1 142.5z" fill="#fbd06c" />
<path d="M1197.9 139.9L1199.9 137.9L1197.3 135.3L1195.3 137.3z" fill="#e8505b" />
<path d="M1208.8 143.8h6.4l-3.2 4z" fill="#d2d4d8" />
<text x="1146.8" y="182.2" font-size="15" fill="#eef0f3" textLength="35.5" lengthAdjust="spacingAndGlyphs">Block</text>
<path d="M1190.2 175.2H1199.8L1195.0 180z" fill="#d2d4d8" />
<rect x="1244.3" y="72.2" width="25.4" height="34.8" fill="#dcdcdc" />
<rect x="1247.5" y="74.6" width="17" height="13" fill="#86c8f8" stroke="#5a5f69" stroke-width="0.7" />
<path d="M1254.2 93.9H1263.8M1249 100.6H1258.9" fill="none" stroke="#a2a2a2" stroke-width="1" />
<rect x="1251.1" y="92" width="1.9" height="3.9" fill="#6a6a6a" />
<rect x="1259.7" y="98.6" width="1.4" height="4" fill="#6a6a6a" />
<path d="M1262.7 100.6L1269.3 98L1279.4 108.1L1274.5 112.1z" fill="#fdd878" />
<path d="M1270 97L1272.8 94.2Q1274.5 93.5 1275.6 94.8L1277.4 97.2L1280.4 94.2Q1281.6 93.8 1282.4 95L1283 96.3L1280.2 100L1283 103.2Q1283.4 104.4 1282.6 105.2L1280.4 107.6z" fill="#f4f4f4" />
<text x="1242.5" y="132.1" font-size="15.6" fill="#eef0f3" textLength="40.5" lengthAdjust="spacingAndGlyphs">Match</text>
<text x="1229.4" y="152.3" font-size="15.6" fill="#eef0f3" textLength="66.5" lengthAdjust="spacingAndGlyphs">Properties</text>
<path d="M1312.8 84L1307.80 75.34A10 10 0 0 1 1317.80 75.34z" fill="#fbbf3f" />
<path d="M1312.8 84L1317.80 75.34A10 10 0 0 1 1322.80 84.00z" fill="#fb923c" />
<path d="M1312.8 84L1322.80 84.00A10 10 0 0 1 1317.80 92.66z" fill="#e55353" />
<path d="M1312.8 84L1317.80 92.66A10 10 0 0 1 1307.80 92.66z" fill="#8b5cf6" />
<path d="M1312.8 84L1307.80 92.66A10 10 0 0 1 1302.80 84.00z" fill="#18b4cc" />
<path d="M1312.8 84L1302.80 84.00A10 10 0 0 1 1307.80 75.34z" fill="#4ccb7f" />
<rect x="1326.5" y="70.5" width="170" height="27" fill="#4c576b" stroke="#252b36" stroke-width="1" />
<rect x="1326.5" y="101.5" width="170" height="27" fill="#4c576b" stroke="#252b36" stroke-width="1" />
<rect x="1326.5" y="132.5" width="170" height="27" fill="#4c576b" stroke="#252b36" stroke-width="1" />
<rect x="1335.4" y="74.3" width="19.6" height="19.2" fill="#ff7f00" stroke="#c2c5cc" stroke-width="1" />
<text x="1360.8" y="90.9" font-size="15.6" fill="#eef0f3" textLength="50.4" lengthAdjust="spacingAndGlyphs">ByLayer</text>
<text x="1417.6" y="121.2" font-size="15.6" fill="#eef0f3" textLength="50.0" lengthAdjust="spacingAndGlyphs">ByLayer</text>
<text x="1417.6" y="152.3" font-size="15.6" fill="#eef0f3" textLength="50.0" lengthAdjust="spacingAndGlyphs">ByLayer</text>
<line x1="1335" y1="114.6" x2="1415" y2="114.6" stroke="#e8e8e8" stroke-width="1" />
<line x1="1335" y1="146.2" x2="1415" y2="146.2" stroke="#e8e8e8" stroke-width="1" />
<path d="M1485.3 82.10000000000001h9.6l-4.8 4.7z" fill="#d2d4d8" />
<path d="M1484.4 113.10000000000001h9.6l-4.8 4.7z" fill="#d2d4d8" />
<path d="M1484.4 144.29999999999998h9.6l-4.8 4.7z" fill="#d2d4d8" />
<rect x="1303" y="105" width="20" height="0.9" fill="#cfcfcf" />
<rect x="1303" y="108.2" width="20" height="2.4" fill="#d8d8d8" />
<rect x="1303" y="113.2" width="20" height="3.9" fill="#d8d8d8" />
<rect x="1303" y="120.2" width="20" height="4.7" fill="#d8d8d8" />
<line x1="1303" y1="138.7" x2="1322" y2="138.7" stroke="#c8c8c8" stroke-width="1" stroke-dasharray="1.5 1.5"/>
<line x1="1303" y1="142.5" x2="1322.5" y2="142.5" stroke="#c8c8c8" stroke-width="1.2" stroke-dasharray="3 1.5"/>
<line x1="1303" y1="145.8" x2="1322.5" y2="145.8" stroke="#c8c8c8" stroke-width="1.2" />
<line x1="1303" y1="149" x2="1322.5" y2="149" stroke="#c8c8c8" stroke-width="1.2" stroke-dasharray="3 1.5"/>
<line x1="1303" y1="152.4" x2="1322.5" y2="152.4" stroke="#c8c8c8" stroke-width="1.2" stroke-dasharray="6 1.5"/>
<text x="1312.6" y="182.2" font-size="15" fill="#eef0f3" textLength="66.4" lengthAdjust="spacingAndGlyphs">Properties</text>
<path d="M1386.4 175.2H1396L1391.2 180z" fill="#d2d4d8" />
<path d="M1488.6 173.4L1493.4 178.2M1493.6 174.2V178.4H1489.4" fill="none" stroke="#d2d4d8" stroke-width="1.1" />
<path d="M1512.6 79.2H1508.6V111.2H1512.6M1530.6 111.2H1534.6V93.2" fill="none" stroke="#e4e4e4" stroke-width="1.4" />
<rect x="1515.3" y="83.5" width="12.5" height="8.8" fill="#4a6a90" stroke="#6fbef5" stroke-width="1.1" />
<circle cx="1521.6" cy="102.4" r="6.1" fill="#6b707d" stroke="#c8c8c8" stroke-width="1.1" />
<path d="M1536.2 72.7L1537.6 78.5L1542.2 74.6L1539.9 80.2L1545.9 79.7L1540.8 82.9L1545.9 86.1L1539.9 85.6L1542.2 91.2L1537.6 87.3L1536.2 93.1L1534.8 87.3L1530.2 91.2L1532.5 85.6L1526.5 86.1L1531.6 82.9L1526.5 79.7L1532.5 80.2L1530.2 74.6L1534.8 78.5z" fill="#fbd374" />
<text x="1506.2" y="132.1" font-size="15.6" fill="#eef0f3" textLength="40.2" lengthAdjust="spacingAndGlyphs">Group</text>
<rect x="1558.5" y="76.6" width="7.4" height="6" fill="#4a6a90" stroke="#6fbef5" stroke-width="1" />
<circle cx="1562" cy="87.9" r="3.6" fill="#6b707d" stroke="#c8c8c8" stroke-width="1" />
<path d="M1568.8 74.6H1571.6V79.6M1571.6 89.6V93.6H1568.8" fill="none" stroke="#e4e4e4" stroke-width="1.2" />
<path d="M1568.8 82L1574.6 87.8M1574.6 82L1568.8 87.8" fill="none" stroke="#f04a55" stroke-width="1.8" />
<path d="M1559 105.6H1556.6V122.2H1559M1566.2 105.6H1568.4V119" fill="none" stroke="#e4e4e4" stroke-width="1.2" />
<rect x="1559.8" y="107.6" width="5.2" height="4.4" fill="#4a6a90" stroke="#6fbef5" stroke-width="1" />
<circle cx="1562.3" cy="117" r="2.9" fill="#6b707d" stroke="#c8c8c8" stroke-width="1" />
<path d="M1566.2 124.6L1569.9 123.6L1567.4 120.9z" fill="#e8e8e8" />
<path d="M1569.9 123.6L1574.9 118.9L1572.4 116.2L1567.4 120.9z" fill="#fbd06c" />
<path d="M1574.9 118.9L1577.0 116.9L1574.4 114.3L1572.4 116.2z" fill="#e8505b" />
<rect x="1552.2" y="132.4" width="28.6" height="26.2" fill="#46607f" stroke="#6fbef5" stroke-width="1.3" />
<path d="M1560 136.5H1557.6V152.8H1560M1567.2 136.5H1569.4V142" fill="none" stroke="#e4e4e4" stroke-width="1.2" />
<rect x="1561.2" y="138.5" width="5.8" height="4.6" fill="#3f7a5c" stroke="#5fd48a" stroke-width="1" />
<circle cx="1563.9" cy="148.3" r="2.9" fill="#3f7a5c" stroke="#5fd48a" stroke-width="1" />
<path d="M1568.4 144.6l0 10.1l2.4 -2.2l2.0 4.3l1.9 -0.9l-2.0 -4.2l3.3 -0.2z" fill="#f4f4f4" stroke="#3a4252" stroke-width="0.4" />
<text x="1511.2" y="182.2" font-size="15" fill="#eef0f3" textLength="46.5" lengthAdjust="spacingAndGlyphs">Groups</text>
<path d="M1565 175.2H1574.6L1569.8 180z" fill="#d2d4d8" />
<rect x="1611.8" y="88" width="36" height="8" fill="#f5c862" />
<path d="M1615.1 88V90.8M1618.3 88V89.8M1621.6 88V90.8M1624.9 88V89.8M1628.1 88V90.8M1631.4 88V89.8M1634.7 88V90.8M1638.0 88V89.8M1641.2 88V90.8M1644.5 88V89.8" fill="none" stroke="#3b4453" stroke-width="1" />
<text x="1602.5" y="132.8" font-size="15.6" fill="#eef0f3" textLength="55.4" lengthAdjust="spacingAndGlyphs">Measure</text>
<path d="M1627.0 140.6h6.4l-3.2 4z" fill="#d2d4d8" />
<path d="M1684.6 73.6L1688.2 74.4L1686 78L1688.6 78.6L1682.4 83L1684 79.4L1681.6 78.8z" fill="#fbd374" />
<rect x="1685" y="82" width="12.2" height="12" fill="#f4f4f4" />
<path d="M1689.4 85.2H1695.2M1689.4 88H1695.2M1689.4 90.8H1695.2" fill="none" stroke="#4a9ae8" stroke-width="1.1" />
<path d="M1686.8 85.2H1688M1686.8 88H1688M1686.8 90.8H1688" fill="none" stroke="#4a9ae8" stroke-width="1.1" />
<path d="M1676.8 80.2l0 12.5l3.0 -2.7l2.5 5.3l2.3 -1.2l-2.5 -5.2l4.0 -0.3z" fill="#f4f4f4" stroke="#3a4252" stroke-width="0.4" />
<rect x="1677.6" y="105.6" width="17.2" height="17.2" fill="none" stroke="#3fc56e" stroke-width="1.1" stroke-dasharray="2 1.2"/>
<rect x="1679.6" y="111.4" width="8.4" height="9.2" fill="#7ed49c" />
<rect x="1684" y="107.8" width="8.6" height="9" fill="#7ed49c" stroke="#3b4453" stroke-width="1" />
<path d="M1688.6 113.6l0 11.0l2.6 -2.4l2.2 4.7l2.1 -1.0l-2.2 -4.6l3.6 -0.2z" fill="#f4f4f4" stroke="#3a4252" stroke-width="0.4" />
<rect x="1679.2" y="136" width="14.8" height="19.8" fill="#d2d2d2" />
<rect x="1681.4" y="138.4" width="10.4" height="3.2" fill="#6e6e6e" />
<rect x="1681.4" y="144.0" width="2.9" height="2.5" fill="#6e6e6e" />
<rect x="1685.1000000000001" y="144.0" width="2.9" height="2.5" fill="#6e6e6e" />
<rect x="1688.8000000000002" y="144.0" width="2.9" height="2.5" fill="#6e6e6e" />
<rect x="1681.4" y="147.6" width="2.9" height="2.5" fill="#6e6e6e" />
<rect x="1685.1000000000001" y="147.6" width="2.9" height="2.5" fill="#6e6e6e" />
<rect x="1688.8000000000002" y="147.6" width="2.9" height="2.5" fill="#6e6e6e" />
<rect x="1681.4" y="151.2" width="2.9" height="2.5" fill="#6e6e6e" />
<rect x="1685.1000000000001" y="151.2" width="2.9" height="2.5" fill="#6e6e6e" />
<rect x="1688.8000000000002" y="151.2" width="2.9" height="2.5" fill="#6e6e6e" />
<text x="1612.3" y="182.2" font-size="15" fill="#eef0f3" textLength="49.7" lengthAdjust="spacingAndGlyphs">Utilities</text>
<path d="M1670.2 175.2H1680L1675.1 180z" fill="#d2d4d8" />
<rect x="1723.9" y="77" width="28.2" height="30.8" fill="#deb276" />
<path d="M1730.6 78.4V75.6H1734.4A3 3 0 0 1 1740.4 75.6H1744.2V78.4z" fill="#f4f4f4" />
<path d="M1733 85H1748L1756 93V112.9H1733z" fill="#dcdcdc" />
<path d="M1748 85V93H1756z" fill="#f6f6f6" />
<text x="1723.7" y="133.6" font-size="15.6" fill="#eef0f3" textLength="32.9" lengthAdjust="spacingAndGlyphs">Paste</text>
<path d="M1736.8 141.7h6.4l-3.2 4z" fill="#d2d4d8" />
<rect x="1776" y="74" width="15" height="17.3" fill="#d2d2d2" />
<path d="M1778.4 77.8H1788.4M1778.4 81.4H1788.4M1778.4 85H1786M1778.4 88.4H1784" fill="none" stroke="#8c8c8c" stroke-width="0.9" />
<path d="M1785 80L1792.6 90.6M1796.2 81L1788.6 90.6" fill="none" stroke="#f4f4f4" stroke-width="1.7" />
<circle cx="1787.2" cy="92.2" r="1.9" fill="#3b4453" stroke="#f4f4f4" stroke-width="1.2" />
<circle cx="1794" cy="92.2" r="1.9" fill="#3b4453" stroke="#f4f4f4" stroke-width="1.2" />
<path d="M1803.1 82.8h6.4l-3.2 4z" fill="#d2d4d8" />
<rect x="1778" y="105.2" width="8.6" height="16.2" fill="#c4c4c4" />
<path d="M1782.2 107.8H1790.4L1794.2 111.6V124.8H1782.2z" fill="#dcdcdc" stroke="#3b4453" stroke-width="0.8" />
<path d="M1790.4 107.8V111.6H1794.2z" fill="#f6f6f6" />
<path d="M1803.1 113.8h6.4l-3.2 4z" fill="#d2d4d8" />
<text x="1730.2" y="182.2" font-size="15.6" fill="#eef0f3" textLength="65.1" lengthAdjust="spacingAndGlyphs">Clipboard</text>
<path d="M1839 77H1856.3V90H1879V107H1839z" fill="#dcdcdc" />
<text x="1843.9" y="132.8" font-size="15.6" fill="#eef0f3" textLength="30.0" lengthAdjust="spacingAndGlyphs">Base</text>
<path d="M1855.9 140.0h6.4l-3.2 4z" fill="#d2d4d8" />
<text x="1826.2" y="182.2" font-size="15" fill="#eef0f3" textLength="31.7" lengthAdjust="spacingAndGlyphs">View</text>
<path d="M1866.4 175.2H1876L1871.2 180z" fill="#d2d4d8" />
<path d="M1886.6 173.8L1891.4 178.6M1891.6 174.6V178.8H1887.4" fill="none" stroke="#d2d4d8" stroke-width="1.1" />
<filter id="psh" x="-10%" y="-10%" width="120%" height="120%"><feGaussianBlur stdDeviation="2.6"/></filter>
<rect x="711.8" y="323.5" width="286.3" height="404.4" fill="#000" opacity="0.26" filter="url(#psh)"/>
<rect x="711.8" y="323.5" width="286.3" height="404.4" fill="#ffffff" />
<g shape-rendering="crispEdges">
<rect x="728.5" y="340.5" width="101" height="101.5" fill="none" stroke="#ff9226" stroke-width="1.25" shape-rendering="geometricPrecision"/>
<rect x="730" y="441" width="99" height="1" fill="#000" />
<circle cx="780.3" cy="388.4" r="33.7" fill="none" stroke="#ff0000" stroke-width="1" />
<rect x="868.5" y="367.5" width="121" height="101.5" fill="none" stroke="#ff9226" stroke-width="1.25" shape-rendering="geometricPrecision"/>
<rect x="870" y="468" width="119" height="1" fill="#000" />
<ellipse cx="930.4" cy="416.6" rx="47" ry="29.6" fill="none" stroke="#00ff00" stroke-width="1" />
<rect x="718.4" y="477.5" width="132.1" height="159.3" fill="none" stroke="#ff9226" stroke-width="1.25" shape-rendering="geometricPrecision"/>
<path d="M732.5 493.2L739.7 495.2L746.7 497.3L753.4 499.3L759.8 501.3L766.0 503.4L772.0 505.4L777.8 507.4L783.3 509.5L788.5 511.5L793.5 513.5L798.3 515.6L802.8 517.6L807.0 519.6L811.1 521.7L814.8 523.7L818.4 525.7L821.7 527.8L824.7 529.8L827.5 531.8L830.1 533.9L832.4 535.9L834.5 537.9L836.3 540.0L837.9 542.0L839.2 544.0L840.3 546.1L841.2 548.1L841.8 550.1L842.2 552.2L842.3 554.2L842.2 556.2L841.8 558.3L841.2 560.3L840.3 562.3L839.2 564.4L837.9 566.4L836.3 568.4L834.5 570.5L832.4 572.5L830.1 574.5L827.5 576.6L824.7 578.6L821.7 580.6L818.4 582.7L814.8 584.7L811.1 586.7L807.0 588.8L802.8 590.8L798.3 592.8L793.5 594.9L788.5 596.9L783.3 598.9L777.8 601.0L772.0 603.0L766.0 605.0L759.8 607.1L753.4 609.1L746.7 611.1L739.7 613.2L732.5 615.2z" fill="none" stroke="#ff00ff" stroke-width="1" />
<rect x="897.4" y="571.6" width="68.6" height="139.4" fill="none" stroke="#ff9226" stroke-width="1.25" shape-rendering="geometricPrecision"/>
<path d="M900.3 574.6L901.8 577.6L903.4 580.5L904.9 583.5L906.5 586.4L908.0 589.3L909.6 592.2L911.1 595.0L912.7 597.8L914.2 600.6L915.8 603.3L917.3 605.9L918.9 608.4L920.4 610.8L922.0 613.1L923.5 615.2L925.1 617.0L926.6 618.5L928.2 619.7L929.8 620.4L931.3 620.7L932.8 620.4L934.4 619.7L935.9 618.5L937.5 617.0L939.0 615.2L940.6 613.1L942.1 610.8L943.7 608.4L945.2 605.9L946.8 603.3L948.3 600.6L949.9 597.8L951.4 595.0L953.0 592.2L954.5 589.3L956.1 586.4L957.6 583.5L959.2 580.5L960.8 577.6L962.3 574.6z" fill="none" stroke="#00ffff" stroke-width="1" />
<path d="M900.3 705.7L901.8 702.7L903.4 699.7L904.9 696.8L906.5 693.8L908.0 690.9L909.6 688.0L911.1 685.2L912.7 682.3L914.2 679.6L915.8 676.9L917.3 674.2L918.9 671.7L920.4 669.3L922.0 667.0L923.5 664.9L925.1 663.0L926.6 661.5L928.2 660.3L929.8 659.6L931.3 659.3L932.8 659.6L934.4 660.3L935.9 661.5L937.5 663.0L939.0 664.9L940.6 667.0L942.1 669.3L943.7 671.7L945.2 674.2L946.8 676.9L948.3 679.6L949.9 682.3L951.4 685.2L953.0 688.0L954.5 690.9L956.1 693.8L957.6 696.8L959.2 699.7L960.8 702.7L962.3 705.7z" fill="none" stroke="#00ffff" stroke-width="1" />
</g>
<path d="M1264 569.5H1310M1315 569.5H1361M1312.5 521V567M1312.5 572V617" fill="none" stroke="#151515" stroke-width="1.1" />
<rect x="1310" y="567" width="5" height="5" fill="none" stroke="#151515" stroke-width="1.1" />
<path d="M18.5 853.5V960.5H80.8z" fill="none" stroke="#1538ff" stroke-width="1.1" />
<path d="M18.5 951.5H27.5V960.5" fill="none" stroke="#1538ff" stroke-width="1.1" />
<path d="M20 882L27.3 889.5L34.8 881.6M27.3 889.5V897" fill="none" stroke="#1538ff" stroke-width="1.1" />
<path d="M55 944L69.8 958.6M70.4 943.6L55 959" fill="none" stroke="#1538ff" stroke-width="1.1" />
<rect x="1840.6" y="245" width="13.8" height="4.2" fill="#f2f2f2" stroke="#3f3f3f" stroke-width="0.9" />
<rect x="1868.4" y="237.2" width="11" height="9.8" fill="#f2f2f2" stroke="#3f3f3f" stroke-width="0.9" />
<rect x="1865.8" y="240" width="11" height="10" fill="#f2f2f2" stroke="#3f3f3f" stroke-width="0.9" />
<rect x="1869.1" y="242.8" width="4.9" height="4" fill="#505050" />
<path d="M1890.6 237.8H1895.2L1896.9 240.2L1898.6 237.8H1903.2L1899.2 243.4L1903.2 249H1898.6L1896.9 246.6L1895.2 249H1890.6L1894.6 243.4z" fill="#f4f4f4" stroke="#4a4040" stroke-width="0.9" />
<rect x="1871.7" y="257.6" width="40.6" height="160.6" fill="#a0a0a0" stroke="#6c6c6c" stroke-width="1.6" rx="4" />
<circle cx="1904.8" cy="264" r="4" fill="#aeaeae" stroke="#b8b8b8" stroke-width="0.8" />
<path d="M1902.8 262L1906.8 266M1906.8 262L1902.8 266" fill="none" stroke="#c2c2c2" stroke-width="1.1" />
<line x1="1873" y1="270.5" x2="1911" y2="270.5" stroke="#939393" stroke-width="1" />
<path d="M1888.6 281.4H1894.6A6 6 0 0 1 1900.6 287.4V304.2H1888.6A11.4 11.4 0 0 1 1888.6 281.4z" fill="none" stroke="#b3b3b3" stroke-width="1.3" />
<circle cx="1888.2" cy="292.4" r="5.3" fill="none" stroke="#b3b3b3" stroke-width="1.6" />
<line x1="1892.2" y1="297" x2="1896.6" y2="301.6" stroke="#b3b3b3" stroke-width="2" />
<text x="1891.6" y="308.2" font-size="10.5" fill="#8495b0" textLength="14.4" lengthAdjust="spacingAndGlyphs" font-weight="bold">2D</text>
<line x1="1875" y1="314.5" x2="1909" y2="314.5" stroke="#acacac" stroke-width="1" />
<path d="M1882 336.6C1879.4 334 1876.6 336.6 1879.4 339.4L1886.6 347.4C1889 349.4 1896.4 349.6 1899.6 347.2C1902.6 343.2 1903.4 337 1904.8 329.2C1905.2 326.8 1902.2 326.2 1901.6 328.6L1899.8 336L1899.4 324.8C1899.4 322.4 1896.2 322.4 1896 324.8L1895.4 335.4L1893.4 323.4C1893 321 1890 321.4 1890.2 323.8L1891 335.8L1887.4 327C1886.6 324.8 1883.8 325.8 1884.4 328L1887.6 341.6z" fill="#a9a9a9" stroke="#939393" stroke-width="1.3" />
<path d="M1877.6 355.8L1894.6 373.2M1895.6 355.8L1877.6 373.2" fill="none" stroke="#8f8f8f" stroke-width="1.5" />
<path d="M1876.6 354.8H1881.4M1876.6 354.8V359.6M1896.6 354.8H1891.8M1896.6 354.8V359.6M1876.6 374.2H1881.4M1876.6 374.2V369.4" fill="none" stroke="#8f8f8f" stroke-width="1.5" />
<circle cx="1897.4" cy="373.6" r="5.6" fill="#a4a4a4" stroke="#8f8f8f" stroke-width="1.5" />
<line x1="1901.6" y1="378" x2="1906.2" y2="382.6" stroke="#8c8c8c" stroke-width="2.6" />
<path d="M1889.6 391.3h5.6l-2.8 3.4z" fill="#8c8c8c" />
<circle cx="1904.6" cy="410.4" r="4" fill="#acacac" stroke="#b6b6b6" stroke-width="0.9" />
<path d="M1902.2 408.4H1907M1902.6 410.2H1906.6L1904.6 412.6z" fill="#c0c0c0" stroke="#c0c0c0" stroke-width="0.8" />
<path d="M412.5 971A3 3 0 0 0 415.5 974H443V711.5H415.5A3 3 0 0 0 412.5 714.5z" fill="#4a4f5b" />
<rect x="443" y="711.5" width="1064" height="237.5" fill="#cecece" fill-opacity="0.672"/>
<rect x="443" y="949.4" width="1064" height="24.5" fill="#dedede" />
<line x1="443" y1="711.5" x2="1507" y2="711.5" stroke="#3a3f48" stroke-width="1.1" stroke-opacity="0.85"/>
<line x1="1507" y1="711" x2="1507" y2="974" stroke="#4c4f57" stroke-width="1.2" />
<line x1="443" y1="949.2" x2="1507" y2="949.2" stroke="#747474" stroke-width="1" />
<line x1="443" y1="973.8" x2="1507" y2="973.8" stroke="#5c5f66" stroke-width="1" />
<rect x="417.2" y="717.2" width="1.9" height="1.7" fill="#e6e6e6" />
<rect x="421.0" y="717.2" width="1.9" height="1.7" fill="#e6e6e6" />
<rect x="424.8" y="717.2" width="1.9" height="1.7" fill="#e6e6e6" />
<rect x="428.59999999999997" y="717.2" width="1.9" height="1.7" fill="#e6e6e6" />
<rect x="432.4" y="717.2" width="1.9" height="1.7" fill="#e6e6e6" />
<rect x="436.2" y="717.2" width="1.9" height="1.7" fill="#e6e6e6" />
<rect x="417.2" y="721.6" width="1.9" height="1.7" fill="#e6e6e6" />
<rect x="421.0" y="721.6" width="1.9" height="1.7" fill="#e6e6e6" />
<rect x="424.8" y="721.6" width="1.9" height="1.7" fill="#e6e6e6" />
<rect x="428.59999999999997" y="721.6" width="1.9" height="1.7" fill="#e6e6e6" />
<rect x="432.4" y="721.6" width="1.9" height="1.7" fill="#e6e6e6" />
<rect x="436.2" y="721.6" width="1.9" height="1.7" fill="#e6e6e6" />
<path d="M419.6 732.8L430.6 743.6M430.6 732.8L419.6 743.6" fill="none" stroke="#dcdcdc" stroke-width="2" />
<path d="M418.2 776.8L428.2 766.8" fill="none" stroke="#dcdcdc" stroke-width="3.2" stroke-linecap="round"/>
<path d="M428.6 759.6A5 5 0 1 0 435.4 766.6L431.4 767.4L428 764.2z" fill="#dcdcdc" />
<text x="446.0" y="733.8" font-size="15" fill="#2e2e2e" textLength="108.0" lengthAdjust="spacingAndGlyphs" font-family="Liberation Mono, monospace">Command: UCS</text>
<text x="446.0" y="752.8" font-size="15" fill="#2e2e2e" textLength="243.0" lengthAdjust="spacingAndGlyphs" font-family="Liberation Mono, monospace">Current ucs name:  parabola</text>
<text x="446.0" y="771.8" font-size="15" fill="#2e2e2e" textLength="792.0" lengthAdjust="spacingAndGlyphs" font-family="Liberation Mono, monospace">Specify origin of UCS or [Face/NAmed/OBject/Previous/View/World/X/Y/Z/ZAxis] &lt;World&gt;: na</text>
<text x="446.0" y="790.8" font-size="15" fill="#2e2e2e" textLength="378.0" lengthAdjust="spacingAndGlyphs" font-family="Liberation Mono, monospace">Enter an option [Restore/Save/Delete/?]: r</text>
<text x="446.0" y="809.8" font-size="15" fill="#2e2e2e" textLength="405.0" lengthAdjust="spacingAndGlyphs" font-family="Liberation Mono, monospace">Enter name of UCS to restore or [?]: parabola</text>
<text x="446.0" y="828.8" font-size="15" fill="#2e2e2e" textLength="117.0" lengthAdjust="spacingAndGlyphs" font-family="Liberation Mono, monospace">Command: PLAN</text>
<text x="446.0" y="847.8" font-size="15" fill="#2e2e2e" textLength="450.0" lengthAdjust="spacingAndGlyphs" font-family="Liberation Mono, monospace">Enter an option [Current ucs/Ucs/World] &lt;Current&gt;:</text>
<text x="446.0" y="866.8" font-size="15" fill="#2e2e2e" textLength="117.0" lengthAdjust="spacingAndGlyphs" font-family="Liberation Mono, monospace">Command: ZOOM</text>
<text x="446.0" y="885.8" font-size="15" fill="#2e2e2e" textLength="558.0" lengthAdjust="spacingAndGlyphs" font-family="Liberation Mono, monospace">Specify corner of window, enter a scale factor (nX or nXP), or</text>
<text x="446.0" y="904.8" font-size="15" fill="#2e2e2e" textLength="693.0" lengthAdjust="spacingAndGlyphs" font-family="Liberation Mono, monospace">[All/Center/Dynamic/Extents/Previous/Scale/Window/Object] &lt;real time&gt;: 1/20xp</text>
<text x="446.0" y="923.8" font-size="15" fill="#2e2e2e" textLength="72.0" lengthAdjust="spacingAndGlyphs" font-family="Liberation Mono, monospace">Command:</text>
<text x="446.0" y="942.8" font-size="15" fill="#2e2e2e" textLength="153.0" lengthAdjust="spacingAndGlyphs" font-family="Liberation Mono, monospace">Command: _.PSPACE</text>
<rect x="448.6" y="954.9" width="18.8" height="13.4" fill="#dadada" stroke="#7c7c7c" stroke-width="1" />
<rect x="448.6" y="954.9" width="18.8" height="3.6" fill="#7c7c7c" />
<rect x="449.8" y="955.8" width="1.2" height="1.2" fill="#e8e8e8" />
<path d="M450.6 960.8L453.6 962.8L450.6 964.8M454.4 965.2H458" fill="none" stroke="#6a6a6a" stroke-width="0.9" />
<path d="M470.3 960.1h9l-4.5 5z" fill="#6e6e6e" />
<text x="489.0" y="967.2" font-size="15" fill="#7c7c7c" textLength="124.6" lengthAdjust="spacingAndGlyphs" font-style="italic" font-family="Liberation Mono, monospace">Type a command</text>
<line x1="16.4" y1="1004.8" x2="24.6" y2="985" stroke="#4a5263" stroke-width="1.2" />
<text x="36.6" y="1001.2" font-size="15.6" fill="#f2f2f2" textLength="42.0" lengthAdjust="spacingAndGlyphs">Model</text>
<text x="110.0" y="1001.2" font-size="15.6" fill="#ffffff" textLength="16.6" lengthAdjust="spacingAndGlyphs" font-weight="bold">a4</text>
<path d="M159.6 995.4H174.8M167.2 987.8V1003" fill="none" stroke="#f2f2f2" stroke-width="2.2" />
<line x1="188.2" y1="1004.8" x2="196.2" y2="985" stroke="#4a5263" stroke-width="1.2" />
<rect x="1304" y="982" width="52" height="30" fill="#3b4453" />
<text x="1309.2" y="1003.4" font-size="15.6" fill="#f4f4f4" textLength="43.1" lengthAdjust="spacingAndGlyphs">PAPER</text>
<rect x="1359" y="982" width="129.8" height="30" fill="#3b4453" />
<path d="M1364.3 987V1006.2H1384M1364.3 1000H1370.4V1006.2" fill="none" stroke="#b4b8c0" stroke-width="1.1" />
<circle cx="1403" cy="996.8" r="8.4" fill="none" stroke="#b4b8c0" stroke-width="1.1" />
<path d="M1403 996.8H1414M1403 996.8L1411.4 988.6" fill="none" stroke="#b4b8c0" stroke-width="1.1" />
<path d="M1425.0 993.9h8.4l-4.2 4.6z" fill="#c9ccd2" />
<path d="M1446.4 988.6L1461 1003.8" fill="none" stroke="#c9494f" stroke-width="1" />
<path d="M1454.6 987V1005" fill="none" stroke="#3fba66" stroke-width="1" />
<rect x="1453.2" y="994.8" width="2.8" height="2.8" fill="#3b4453" stroke="#c9ccd2" stroke-width="0.9" />
<path d="M1475.0 993.9h8.4l-4.2 4.6z" fill="#c9ccd2" />
<rect x="1490.7" y="982" width="28.3" height="30" fill="#5b8dc8" />
<rect x="1521" y="982" width="27.9" height="30" fill="#5b8dc8" />
<rect x="1548.9" y="982" width="20.9" height="30" fill="#3b4453" />
<path d="M1495.6 1003.8H1515M1495.6 1003.8L1509.8 989.5" fill="none" stroke="#f4f4f4" stroke-width="1.2" />
<rect x="1500.8" y="994.9" width="3.2" height="3.2" fill="#f4f4f4" />
<rect x="1527.6" y="989.8" width="16.8" height="16" fill="none" stroke="#f4f4f4" stroke-width="1.2" />
<rect x="1525.4" y="987.4" width="4.6" height="4.6" fill="#5b8dc8" stroke="#f4f4f4" stroke-width="1" />
<path d="M1555.6 993.9h8.4l-4.2 4.6z" fill="#c9ccd2" />
<rect x="1572.8" y="982" width="90.2" height="30" fill="#3b4453" />
<rect x="1578.6" y="987.6" width="19" height="18.6" fill="none" stroke="#c9ccd2" stroke-width="1.2" stroke-dasharray="4 2"/>
<rect x="1586" y="995.8" width="8.4" height="8" fill="none" stroke="#c9ccd2" stroke-width="1.1" />
<path d="M1579.4 988.4L1585.6 995" fill="none" stroke="#c9ccd2" stroke-width="1.1" />
<path d="M1578.4 987.4H1583L1578.4 992z" fill="#c9ccd2" />
<path d="M1616.8 987.2L1619.0 995.4L1621.0 996.6L1620.0 998.2L1625.8 1006.6L1616.8 1001.4L1607.8 1006.6L1613.6 998.2L1612.6 996.6L1614.6 995.4z" fill="#cfcfcf" />
<circle cx="1624.6" cy="991.6" r="3" fill="none" stroke="#cfcfcf" stroke-width="1" />
<path d="M1647 987.2L1649.2 995.4L1651.2 996.6L1650.2 998.2L1656 1006.6L1647 1001.4L1638 1006.6L1643.8 998.2L1642.8 996.6L1644.8 995.4z" fill="#cfcfcf" />
<path d="M1655.4 987.6L1651.6 992.6H1654L1652.2 996.8L1657 991H1654.4z" fill="#cfcfcf" />
<rect x="1666" y="982" width="50.1" height="30" fill="#3b4453" />
<rect x="-2.1" y="-10.4" width="4.2" height="5" fill="#d4d4d4" transform="translate(1681,996.6) rotate(0)"/>
<rect x="-2.1" y="-10.4" width="4.2" height="5" fill="#d4d4d4" transform="translate(1681,996.6) rotate(45)"/>
<rect x="-2.1" y="-10.4" width="4.2" height="5" fill="#d4d4d4" transform="translate(1681,996.6) rotate(90)"/>
<rect x="-2.1" y="-10.4" width="4.2" height="5" fill="#d4d4d4" transform="translate(1681,996.6) rotate(135)"/>
<rect x="-2.1" y="-10.4" width="4.2" height="5" fill="#d4d4d4" transform="translate(1681,996.6) rotate(180)"/>
<rect x="-2.1" y="-10.4" width="4.2" height="5" fill="#d4d4d4" transform="translate(1681,996.6) rotate(225)"/>
<rect x="-2.1" y="-10.4" width="4.2" height="5" fill="#d4d4d4" transform="translate(1681,996.6) rotate(270)"/>
<rect x="-2.1" y="-10.4" width="4.2" height="5" fill="#d4d4d4" transform="translate(1681,996.6) rotate(315)"/>
<circle cx="1681" cy="996.6" r="5.6" fill="none" stroke="#d4d4d4" stroke-width="4.4" />
<path d="M1702.6 993.9h8.4l-4.2 4.6z" fill="#c9ccd2" />
<rect x="1716.1" y="982" width="31.1" height="30" fill="#3b4453" />
<line x1="1716.6" y1="982" x2="1716.6" y2="1012" stroke="#222933" stroke-width="1" />
<path d="M1722 996.6H1741M1731.5 987.1V1006.1" fill="none" stroke="#f0f0f0" stroke-width="2.6" />
<rect x="1750" y="982" width="30.3" height="30" fill="#3b4453" />
<rect x="1755.6" y="987.6" width="6.8" height="6.8" fill="none" stroke="#c9ccd2" stroke-width="1.1" />
<circle cx="1770.5" cy="995.7" r="4.2" fill="none" stroke="#c9ccd2" stroke-width="1.1" />
<path d="M1758.4 1006.2L1762.9 999L1767.5 1006.2z" fill="none" stroke="#c9ccd2" stroke-width="1.1" />
<rect x="1783" y="982" width="68.2" height="30" fill="#3b4453" />
<path d="M1787 984.2H1802L1807.3 989.4V1002.4H1787z" fill="#3f74b8" />
<path d="M1787 984.2H1802L1807.3 989.4L1797 992z" fill="#5a94d8" />
<path d="M1792.4 984.4V996M1787.2 989.6H1798" fill="none" stroke="#e8f2fc" stroke-width="1" />
<circle cx="1792.4" cy="989.6" r="1.6" fill="#f2f8ff" />
<path d="M1787 998.4H1792L1793.4 999.8H1797.6V1005.8H1787z" fill="#f3b83c" />
<path d="M1797.4 1002.8L1803 1007.2L1811.2 998.2" fill="none" stroke="#3fbf62" stroke-width="2.6" />
<path d="M1824.6 993.6A8.2 8.2 0 1 1 1838.4 1001.4" fill="none" stroke="#c9ccd2" stroke-width="1.2" />
<path d="M1832.4 988.4V995.6H1837" fill="none" stroke="#c9ccd2" stroke-width="1.1" />
<path d="M1821.6 991.4L1824.4 996L1827.8 991.8z" fill="#c9ccd2" />
<path d="M1821.4 995.4H1828.2L1830.6 997.8V1006.6H1821.4z" fill="#e8e8e8" />
<rect x="1822.4" y="998.6" width="7.2" height="7.2" fill="#3f74b8" />
<path d="M1822.4 1005.8V1003L1825 1001.8L1827 1003.2L1829.6 1002.4V1005.8z" fill="#f3b83c" />
<circle cx="1836.3" cy="1002.6" r="4.5" fill="#4ea3e8" />
<rect x="1835.75" y="1001.8" width="1.1" height="3.4" fill="#fff" />
<rect x="1835.75" y="999.8" width="1.1" height="1.2" fill="#fff" />
<rect x="1854" y="982" width="60" height="30" fill="#3b4453" />
<rect x="1859.6" y="989.8" width="19.2" height="13.6" fill="none" stroke="#c9ccd2" stroke-width="1.2" />
<path d="M1862.8 1000.6L1866.8 996.8M1875.8 992.6L1871.8 996.4" fill="none" stroke="#c9ccd2" stroke-width="1.1" />
<path d="M1861.8 1001.6V997.4L1866 1001.6zM1876.8 991.6V995.8L1872.6 991.6z" fill="#c9ccd2" />
<rect x="1889" y="987.8" width="20" height="2.4" fill="#e6e6e6" />
<rect x="1889" y="995.2" width="20" height="2.4" fill="#e6e6e6" />
<rect x="1889" y="1002.8" width="20" height="2.4" fill="#e6e6e6" />
</svg>
</div>
</body></html>
